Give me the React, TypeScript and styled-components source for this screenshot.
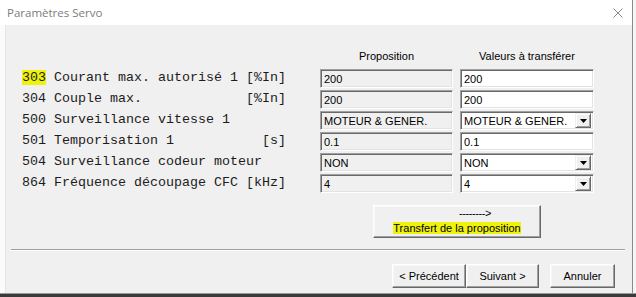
import React from "react";
import styled, { createGlobalStyle } from "styled-components";

const Global = createGlobalStyle`
  html, body { margin: 0; padding: 0; background: #f4f4f4; }
  * { box-sizing: border-box; }
`;

const Screen = styled.div`
  width: 636px;
  height: 297px;
  display: flex;
  flex-direction: column;
  overflow: hidden;
  background: #f6f6f6;
`;

const Window = styled.div`
  width: 633px;
  height: 293px;
  display: flex;
  flex-direction: column;
  background: #fbfbfb;
  border-right: 1px solid #8a8a8a;
`;

const TitleBar = styled.div`
  height: 25px;
  flex: none;
  display: flex;
  align-items: center;
  justify-content: space-between;
  padding: 0 9px 0 7px;
  background: #ffffff;
`;

const Title = styled.span`
  font-family: "Segoe UI", "Open Sans", "Liberation Sans", sans-serif;
  font-size: 11.5px;
  color: #7c7c7c;
`;

const Close = styled.svg`
  width: 10px;
  height: 10px;
`;

const Client = styled.div`
  flex: 1;
  margin-left: 5px;
  background: #f0f0f0;
  border-left: 1px solid #e6e6e6;
  display: flex;
  flex-direction: column;
  font-family: "Liberation Sans", Arial, sans-serif;
  font-size: 11px;
  color: #000;
`;

const Grid = styled.div`
  display: grid;
  grid-template-columns: 291px 133px 134px;
  justify-content: start;
  column-gap: 7px;
  row-gap: 2px;
  grid-auto-rows: 19px;
  padding-left: 16px;
`;

const HeaderGrid = styled(Grid)`
  grid-auto-rows: 14px;
  padding-top: 24px;
  margin-bottom: 6px;
`;

const ColHead = styled.div`
  text-align: center;
  line-height: 14px;
`;

const Label = styled.div`
  font-family: "Liberation Mono", "Courier New", monospace;
  font-size: 13.33px;
  line-height: 15px;
  white-space: pre;
  color: #1c1c1c;
  align-self: center;
  margin-top: -2px;
`;

const Mark = styled.span`
  background: #eef20c;
`;

const Field = styled.div<{ $readonly?: boolean }>`
  height: 19px;
  min-width: 0;
  display: flex;
  align-items: center;
  border: 1px solid;
  border-color: #a0a0a0 #ffffff #ffffff #a0a0a0;
  box-shadow: inset 1px 1px #696969, inset -1px -1px #e3e3e3;
  background: ${(p) => (p.$readonly ? "#f0f0f0" : "#ffffff")};
  padding: 1px 2px 0 3px;
  line-height: 15px;
  white-space: nowrap;
  overflow: hidden;
`;

const FieldText = styled.span`
  flex: 1;
`;

const DropButton = styled.div`
  width: 16px;
  height: 15px;
  flex: none;
  display: flex;
  align-items: center;
  justify-content: center;
  background: #f0f0f0;
  border: 1px solid;
  border-color: #f0f0f0 #696969 #696969 #f0f0f0;
  box-shadow: inset 1px 1px #ffffff, inset -1px -1px #a0a0a0;
  margin-top: -1px;
`;

const TransferRow = styled.div`
  display: flex;
  padding-left: 367px;
  margin-top: 12px;
`;

const RaisedButton = styled.div<{ $w: number; $h: number }>`
  width: ${(p) => p.$w}px;
  height: ${(p) => p.$h}px;
  background: #f0f0f0;
  border: 1px solid;
  border-color: #ffffff #696969 #696969 #ffffff;
  box-shadow: inset -1px -1px #a0a0a0, inset 1px 1px #f7f7f7;
  display: flex;
  flex-direction: column;
  align-items: center;
  justify-content: center;
  line-height: 13px;
  color: #000;
`;

const TransferButton = styled(RaisedButton)`
  justify-content: flex-start;
  padding-top: 1px;
`;

const ArrowLine = styled.div`
  padding-left: 36px;
  letter-spacing: -0.4px;
`;

const HighLine = styled.div`
  margin-top: 1px;
  line-height: 14px;
`;

const Separator = styled.div`
  margin: 11px 0 0 5px;
  width: 614px;
  height: 2px;
  border-top: 1px solid #a0a0a0;
  border-bottom: 1px solid #ffffff;
`;

const ButtonRow = styled.div`
  display: flex;
  justify-content: flex-end;
  padding-right: 17px;
  margin-top: 13px;
`;

const Gap = styled.div<{ $w: number }>`
  width: ${(p) => p.$w}px;
`;

const Taskbar = styled.div`
  flex: 1;
  background: #3a3a3a;
  border-top: 1px solid #9a9a9a;
`;

const Arrow = () => (
  <svg width="7" height="4" viewBox="0 0 7 4">
    <polygon points="0,0 7,0 3.5,4" fill="#000" />
  </svg>
);

type Row = {
  label: React.ReactNode;
  prop: string;
  value: string;
  combo?: boolean;
};

const rows: Row[] = [
  {
    label: (
      <>
        <Mark>303</Mark> Courant max. autorisé 1 [%In]
      </>
    ),
    prop: "200",
    value: "200",
  },
  { label: "304 Couple max.             [%In]", prop: "200", value: "200" },
  { label: "500 Surveillance vitesse 1", prop: "MOTEUR & GENER.", value: "MOTEUR & GENER.", combo: true },
  { label: "501 Temporisation 1           [s]", prop: "0.1", value: "0.1" },
  { label: "504 Surveillance codeur moteur", prop: "NON", value: "NON", combo: true },
  { label: "864 Fréquence découpage CFC [kHz]", prop: "4", value: "4", combo: true },
];

export default function App() {
  return (
    <>
      <Global />
      <Screen>
        <Window>
          <TitleBar>
            <Title>Paramètres Servo</Title>
            <Close viewBox="0 0 10 10">
              <path d="M0.5 0.5 L9.5 9.5 M9.5 0.5 L0.5 9.5" stroke="#8a8a8a" strokeWidth="1" fill="none" />
            </Close>
          </TitleBar>
          <Client>
            <HeaderGrid>
              <div />
              <ColHead>Proposition</ColHead>
              <ColHead>Valeurs à transférer</ColHead>
            </HeaderGrid>
            <Grid>
              {rows.map((r, i) => (
                <React.Fragment key={i}>
                  <Label>{r.label}</Label>
                  <Field $readonly>
                    <FieldText>{r.prop}</FieldText>
                  </Field>
                  <Field>
                    <FieldText>{r.value}</FieldText>
                    {r.combo && (
                      <DropButton>
                        <Arrow />
                      </DropButton>
                    )}
                  </Field>
                </React.Fragment>
              ))}
            </Grid>
            <TransferRow>
              <TransferButton $w={168} $h={33}>
                <ArrowLine>--------&gt;</ArrowLine>
                <HighLine>
                  <Mark>Transfert de la proposition</Mark>
                </HighLine>
              </TransferButton>
            </TransferRow>
            <Separator />
            <ButtonRow>
              <RaisedButton $w={74} $h={24}>&lt; Précédent</RaisedButton>
              <RaisedButton $w={73} $h={24}>Suivant &gt;</RaisedButton>
              <Gap $w={11} />
              <RaisedButton $w={65} $h={24}>Annuler</RaisedButton>
            </ButtonRow>
          </Client>
        </Window>
        <Taskbar />
      </Screen>
    </>
  );
}
